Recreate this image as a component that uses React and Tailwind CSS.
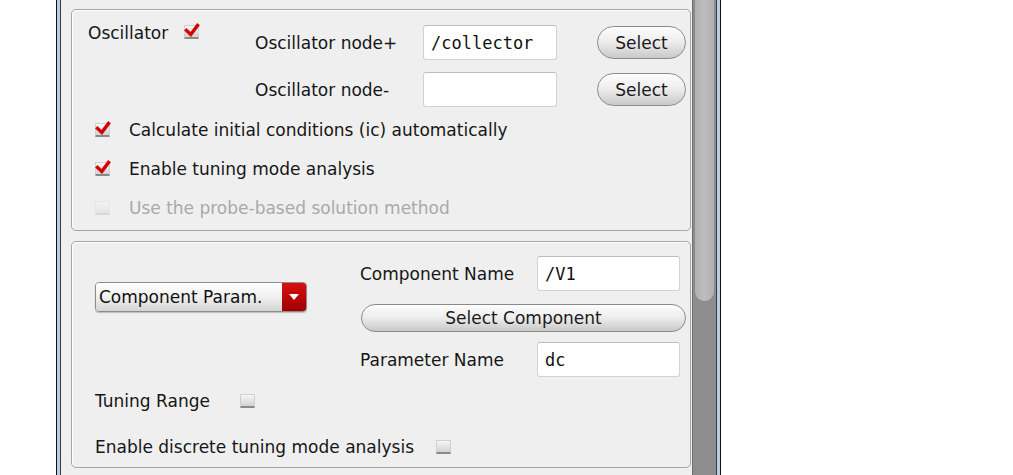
import React from "react";

const font = { fontFamily: '"DejaVu Sans", "Liberation Sans", sans-serif' };
const mono = { fontFamily: '"DejaVu Sans Mono", "Liberation Mono", monospace' };

function Check({ checked, disabled }) {
  return (
    <span className="relative block w-[15px] h-[14px] shrink-0">
      <span
        className={
          disabled
            ? "absolute inset-0 rounded-[1px] bg-linear-to-b from-[#f2f2f2] to-[#e3e3e3] border border-[#e6e6e6] border-b-2 border-b-[#d8d8d8]"
            : "absolute inset-0 rounded-[1px] bg-linear-to-b from-[#f6f6f6] to-[#d2d2d2] border border-[#d0d0d0] border-b-2 border-b-[#8a8a8a]"
        }
      />
      {checked && (
        <svg className="absolute left-0 top-[-2px]" width="16" height="15" viewBox="0 0 16 15">
          <path d="M2.5 7.5 L6.8 11.5 L13.5 2.5" stroke="#d60000" strokeWidth="3.4" fill="none" strokeLinecap="square" />
        </svg>
      )}
    </span>
  );
}

function Input({ value, className }) {
  return (
    <div
      className={
        "h-[35px] bg-white border border-[#d2d2d2] border-t-[#bdbdbd] rounded-[3px] flex items-center pl-[7px] text-[17px] text-[#111] " +
        className
      }
      style={mono}
    >
      {value}
    </div>
  );
}

function Button({ children, className }) {
  return (
    <div
      className={
        "flex items-center justify-center rounded-full border border-[#8a8a8a] bg-linear-to-b from-[#fdfdfd] via-[#ececec] to-[#c9c9c9] text-[17px] text-[#1a1a1a] shadow-[inset_0_1px_0_#ffffff] " +
        className
      }
    >
      {children}
    </div>
  );
}

export default function App() {
  return (
    <div className="w-[1013px] h-[475px] bg-white overflow-hidden text-[#161616]" style={font}>
      <div className="ml-[56px] w-[665px] h-full border-x border-[#111111]">
        <div className="h-full border-x-[3px] border-[#b9cce2]">
          <div className="h-full border-x border-[#3c3c3c] flex">
            <div className="flex-1 bg-[#efefef] pl-[10px] pr-[1px] pt-[9px] text-[17px] leading-[20px]">
              {/* Panel 1 */}
              <div className="h-[222px] border border-[#a6a6a6] rounded-[5px] shadow-[inset_1px_1px_0_#ffffff]">
                <div className="pt-[13px] pl-[16px] flex items-start">
                  <div className="w-[167px] h-[20px] flex items-center">
                    <span>Oscillator</span>
                    <span className="ml-[16px] mt-[-3px] flex">
                      <Check checked />
                    </span>
                  </div>
                  <div className="pt-[2px] flex flex-col">
                    <div className="flex items-center">
                      <span className="w-[168px]">Oscillator node+</span>
                      <Input value="/collector" className="w-[134px]" />
                      <Button className="ml-[40px] w-[89px] h-[33px]">Select</Button>
                    </div>
                    <div className="flex items-center mt-[12px]">
                      <span className="w-[168px]">Oscillator node-</span>
                      <Input value="" className="w-[134px]" />
                      <Button className="ml-[40px] w-[89px] h-[33px]">Select</Button>
                    </div>
                  </div>
                </div>
                <div className="pl-[23px] mt-[13px] flex flex-col gap-[19px]">
                  <div className="h-[20px] flex items-center">
                    <Check checked />
                    <span className="ml-[19px]">Calculate initial conditions (ic) automatically</span>
                  </div>
                  <div className="h-[20px] flex items-center">
                    <Check checked />
                    <span className="ml-[19px]">Enable tuning mode analysis</span>
                  </div>
                  <div className="h-[20px] flex items-center text-[#a9a9a9]">
                    <Check disabled />
                    <span className="ml-[19px]">Use the probe-based solution method</span>
                  </div>
                </div>
              </div>

              {/* Panel 2 */}
              <div className="mt-[10px] h-[227px] border border-[#a6a6a6] rounded-[5px] shadow-[inset_1px_1px_0_#ffffff]">
                <div className="pt-[14px] pl-[23px] flex items-start">
                  <div className="w-[265px]">
                    <div className="mt-[26px] w-[212px] h-[30px] flex rounded-[4px] border border-[#8c8c8c] overflow-hidden shadow-[0_1px_1px_#bdbdbd]">
                      <div className="flex-1 flex items-center pl-[3px] bg-linear-to-b from-[#ffffff] via-[#f0f0f0] to-[#d4d4d4] text-[#111]">
                        Component Param.
                      </div>
                      <div className="w-[24px] flex items-center justify-center bg-linear-to-b from-[#d81010] to-[#a00000]">
                        <svg width="10" height="7" viewBox="0 0 10 7">
                          <path d="M0 0 L10 0 L5 6 Z" fill="#ffffff" />
                        </svg>
                      </div>
                    </div>
                  </div>
                  <div className="w-[326px] flex flex-col">
                    <div className="flex items-center">
                      <span className="w-[177px]">Component Name</span>
                      <Input value="/V1" className="w-[143px]" />
                    </div>
                    <Button className="mt-[13px] ml-[1px] w-[325px] h-[28px]">Select Component</Button>
                    <div className="flex items-center mt-[10px]">
                      <span className="w-[177px]">Parameter Name</span>
                      <Input value="dc" className="w-[143px]" />
                    </div>
                  </div>
                </div>
                <div className="pl-[23px] mt-[14px] h-[20px] flex items-center">
                  <span>Tuning Range</span>
                  <span className="ml-[30px] flex">
                    <Check />
                  </span>
                </div>
                <div className="pl-[23px] mt-[26px] h-[20px] flex items-center">
                  <span>Enable discrete tuning mode analysis</span>
                  <span className="ml-[22px] flex">
                    <Check />
                  </span>
                </div>
              </div>
            </div>

            {/* Scrollbar */}
            <div className="w-[24px] h-full bg-[#8d8d8d] border-l border-[#6f6f6f]">
              <div className="ml-[1px] w-[21px] h-[302px] bg-linear-to-r from-[#b0b0b0] via-[#bdbdbd] to-[#b0b0b0] border-x border-b border-[#8a8a8a] rounded-b-[10px]" />
            </div>
          </div>
        </div>
      </div>
    </div>
  );
}
